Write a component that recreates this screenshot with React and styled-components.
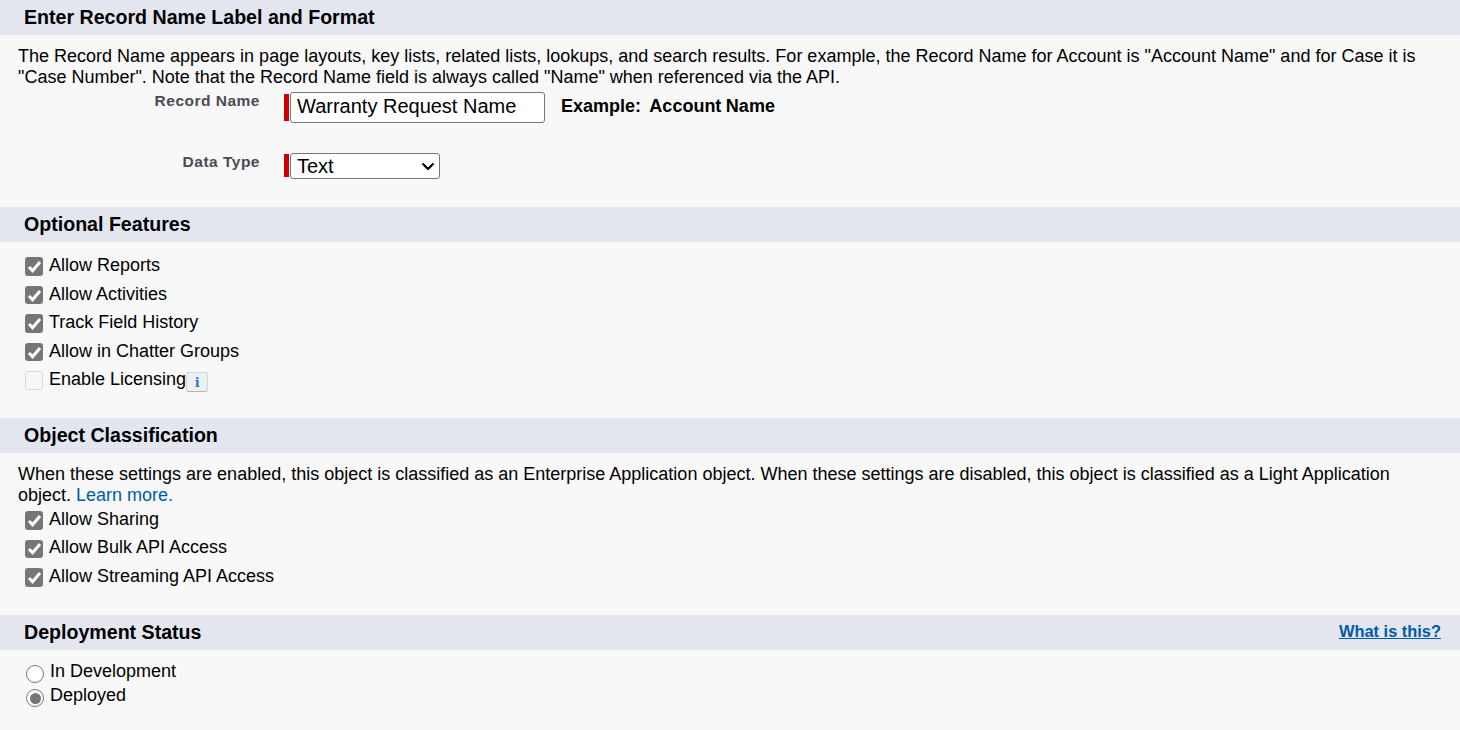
import React from 'react'
import styled, { createGlobalStyle } from 'styled-components'

const GlobalStyle = createGlobalStyle`
  html, body {
    margin: 0;
    padding: 0;
    background: #f8f8f8;
    color: #000;
    font-family: "Liberation Sans", Arial, sans-serif;
    overflow: hidden;
  }
`

const Page = styled.div`
  width: 1460px;
  height: 730px;
  display: flex;
  flex-direction: column;
`

const SectionHeader = styled.div`
  box-sizing: border-box;
  height: 35px;
  flex: none;
  display: flex;
  align-items: center;
  justify-content: space-between;
  padding: 0 19px 1px 24px;
  background: #e3e6ef;
`

const SectionTitle = styled.h3`
  margin: 0;
  font-size: 19.6px;
  font-weight: 700;
`

const HelpLink = styled.a`
  margin-bottom: 1px;
  font-size: 16.4px;
  font-weight: 700;
  color: #015ba7;
  text-decoration: underline;
`

const Section = styled.section`
  height: ${props => props.height}px;
  flex: none;
`

const Description = styled.p`
  margin: 0;
  padding: 11px 30px 0 18px;
  font-size: 18px;
  line-height: 21px;
`

const LearnMore = styled.a`
  color: #015ba7;
`

const FormRow = styled.div`
  display: flex;
  align-items: flex-start;
  height: ${props => props.height}px;
`

const FieldLabel = styled.label`
  width: 260px;
  flex: none;
  padding-top: ${props => props.top}px;
  text-align: right;
  font-size: 15.5px;
  line-height: 18px;
  font-weight: 700;
  letter-spacing: 0.5px;
  color: #4a4a56;
`

const Required = styled.div`
  display: flex;
  margin-left: 24px;
  padding-top: ${props => props.top}px;

  &::before {
    content: '';
    width: 5px;
    height: ${props => props.bar}px;
    margin: ${props => props.barTop}px 1px 0 0;
    background: #c00;
  }
`

const TextInput = styled.input`
  box-sizing: border-box;
  width: 255px;
  height: 31px;
  padding: 0 6px 2px;
  border: 1px solid #767676;
  border-radius: 3px;
  background: #fff;
  font-family: inherit;
  font-size: 20px;
  color: #000;
`

const SelectInput = styled.select`
  box-sizing: border-box;
  width: 150px;
  height: 26px;
  padding: 0 6px;
  border: 1px solid #767676;
  border-radius: 3px;
  appearance: none;
  background: #fff url("data:image/svg+xml,%3Csvg xmlns='http://www.w3.org/2000/svg' width='14' height='10'%3E%3Cpath d='M1.5 1.5l5.5 5.5 5.5-5.5' fill='none' stroke='%23000' stroke-width='2.2'/%3E%3C/svg%3E") no-repeat 130px 8px;
  font-family: inherit;
  font-size: 20px;
  color: #000;
`

const Example = styled.div`
  margin-left: 16px;
  padding-top: 8px;
  font-size: 18px;
  line-height: 21px;
  font-weight: 700;
  word-spacing: -0.5px;
  white-space: pre;
`

const OptionList = styled.div`
  display: flex;
  flex-direction: column;
  margin-top: ${props => props.top}px;
  padding-left: 24px;
`

const Option = styled.div`
  display: flex;
  align-items: center;
  height: 28.5px;
  font-size: 18px;
`

const Box = styled.span`
  box-sizing: border-box;
  width: 18px;
  height: 18.5px;
  flex: none;
  display: flex;
  align-items: center;
  justify-content: center;
  margin: 2px 6px 0 1px;
  border-radius: 3px;
  background: ${props => (props.checked ? '#767676' : '#f7f7f7')};
  border: ${props => (props.checked ? 'none' : '1px solid #d8d8d8')};
`

const InfoButton = styled.span`
  box-sizing: border-box;
  width: 22px;
  height: 20px;
  margin: 5px 0 0;
  display: flex;
  align-items: center;
  justify-content: center;
  border: 1px solid #d4d4d4;
  border-bottom-color: #b5b5b5;
  border-radius: 3px;
  background: #eef1f3;
  font-family: "DejaVu Serif", serif;
  font-size: 13px;
  font-weight: 700;
  color: #2a74c9;
`

const RadioList = styled.div`
  display: flex;
  flex-direction: column;
  padding: 9px 0 0 26px;
`

const RadioRow = styled.div`
  display: flex;
  align-items: center;
  height: 24px;
  font-size: 18px;
`

const RadioDot = styled.span`
  box-sizing: border-box;
  width: 18px;
  height: 18px;
  flex: none;
  display: flex;
  align-items: center;
  justify-content: center;
  margin: 6px 6px 0 0;
  border: 1.5px solid #767676;
  border-radius: 50%;
  background: #fff;

  &::after {
    content: '';
    display: ${props => (props.checked ? 'block' : 'none')};
    width: 11px;
    height: 11px;
    border-radius: 50%;
    background: #767676;
  }
`

const CheckOption = ({ checked, children }) => (
  <Option>
    <Box checked={checked}>
      {checked && (
        <svg width="15" height="15" viewBox="0 0 15 15" fill="none">
          <path d="M2 8l3.6 3.8L13 3" stroke="#fff" strokeWidth="3" />
        </svg>
      )}
    </Box>
    {children}
  </Option>
)

const App = () => (
  <Page>
    <GlobalStyle />
    <SectionHeader>
      <SectionTitle>Enter Record Name Label and Format</SectionTitle>
    </SectionHeader>
    <Section height={172}>
      <Description>
        The Record Name appears in page layouts, key lists, related lists, lookups, and search results. For example, the Record Name for Account is "Account Name" and for Case it is "Case Number". Note that the Record Name field is always called "Name" when referenced via the API.
      </Description>
      <FormRow height={60}>
        <FieldLabel top={4}>Record Name</FieldLabel>
        <Required top={4} bar={27} barTop={2}>
          <TextInput defaultValue="Warranty Request Name" />
        </Required>
        <Example>Example:  Account Name</Example>
      </FormRow>
      <FormRow height={40}>
        <FieldLabel top={5}>Data Type</FieldLabel>
        <Required top={5} bar={23} barTop={1}>
          <SelectInput defaultValue="Text">
            <option>Text</option>
            <option>Auto Number</option>
          </SelectInput>
        </Required>
      </FormRow>
    </Section>

    <SectionHeader>
      <SectionTitle>Optional Features</SectionTitle>
    </SectionHeader>
    <Section height={176}>
      <OptionList top={9.4}>
        <CheckOption checked>Allow Reports</CheckOption>
        <CheckOption checked>Allow Activities</CheckOption>
        <CheckOption checked>Track Field History</CheckOption>
        <CheckOption checked>Allow in Chatter Groups</CheckOption>
        <CheckOption>
          Enable Licensing
          <InfoButton>i</InfoButton>
        </CheckOption>
      </OptionList>
    </Section>

    <SectionHeader>
      <SectionTitle>Object Classification</SectionTitle>
    </SectionHeader>
    <Section height={162}>
      <Description>
        When these settings are enabled, this object is classified as an Enterprise Application object. When these settings are disabled, this object is classified as a Light Application object. <LearnMore>Learn more.</LearnMore>
      </Description>
      <OptionList top={-1}>
        <CheckOption checked>Allow Sharing</CheckOption>
        <CheckOption checked>Allow Bulk API Access</CheckOption>
        <CheckOption checked>Allow Streaming API Access</CheckOption>
      </OptionList>
    </Section>

    <SectionHeader>
      <SectionTitle>Deployment Status</SectionTitle>
      <HelpLink href="#">What is this?</HelpLink>
    </SectionHeader>
    <RadioList>
      <RadioRow>
        <RadioDot />
        In Development
      </RadioRow>
      <RadioRow>
        <RadioDot checked />
        Deployed
      </RadioRow>
    </RadioList>
  </Page>
)

export default App
